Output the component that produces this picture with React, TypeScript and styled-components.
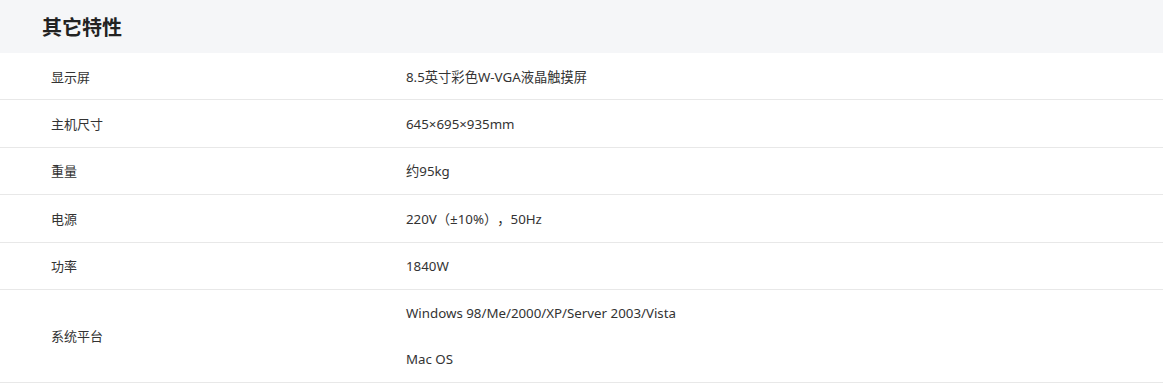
import React from "react";
import styled, { createGlobalStyle } from "styled-components";

const Global = createGlobalStyle`
  html, body { margin: 0; padding: 0; background: #fff; }
  body {
    font-family: "Noto Sans", "Noto Sans CJK SC", sans-serif;
    color: #333;
    text-spacing-trim: space-all;
  }
`;

const Section = styled.section`
  width: 100%;
`;

const Header = styled.div`
  height: 53px;
  background: #f5f6f8;
  display: flex;
  align-items: center;
  padding-left: 42px;
`;

const Title = styled.h2`
  margin: 0;
  font-size: 20px;
  font-weight: 700;
  color: #222;
  font-family: "Noto Sans CJK SC", sans-serif;
`;

const Row = styled.div`
  display: grid;
  grid-template-columns: 355px 1fr;
  border-bottom: 1px solid #e8e8e8;
`;

const Label = styled.div`
  padding-left: 51px;
  display: flex;
  align-items: center;
  font-size: 13px;
  font-family: "Noto Sans CJK SC", sans-serif;
`;

const Value = styled.div`
  padding-left: 51px;
  display: flex;
  flex-direction: column;
  font-size: 13.3px;
`;

const Line = styled.div<{ $h: number }>`
  height: ${(p) => p.$h}px;
  display: flex;
  align-items: center;
  white-space: pre;
`;

const rows: { label: string; values: string[] }[] = [
  { label: "显示屏", values: ["8.5英寸彩色W-VGA液晶触摸屏"] },
  { label: "主机尺寸", values: ["645×695×935mm"] },
  { label: "重量", values: ["约95kg"] },
  { label: "电源", values: ["220V（±10%），50Hz"] },
  { label: "功率", values: ["1840W"] },
  { label: "系统平台", values: ["Windows 98/Me/2000/XP/Server 2003/Vista", "Mac OS"] },
];

export default function App() {
  return (
    <>
      <Global />
      <Section>
        <Header>
          <Title>其它特性</Title>
        </Header>
        {rows.map((r) => (
          <Row key={r.label}>
            <Label>{r.label}</Label>
            <Value>
              {r.values.map((v) => (
                <Line key={v} $h={r.values.length > 1 ? 46 : 46.4}>
                  {v}
                </Line>
              ))}
            </Value>
          </Row>
        ))}
      </Section>
    </>
  );
}
